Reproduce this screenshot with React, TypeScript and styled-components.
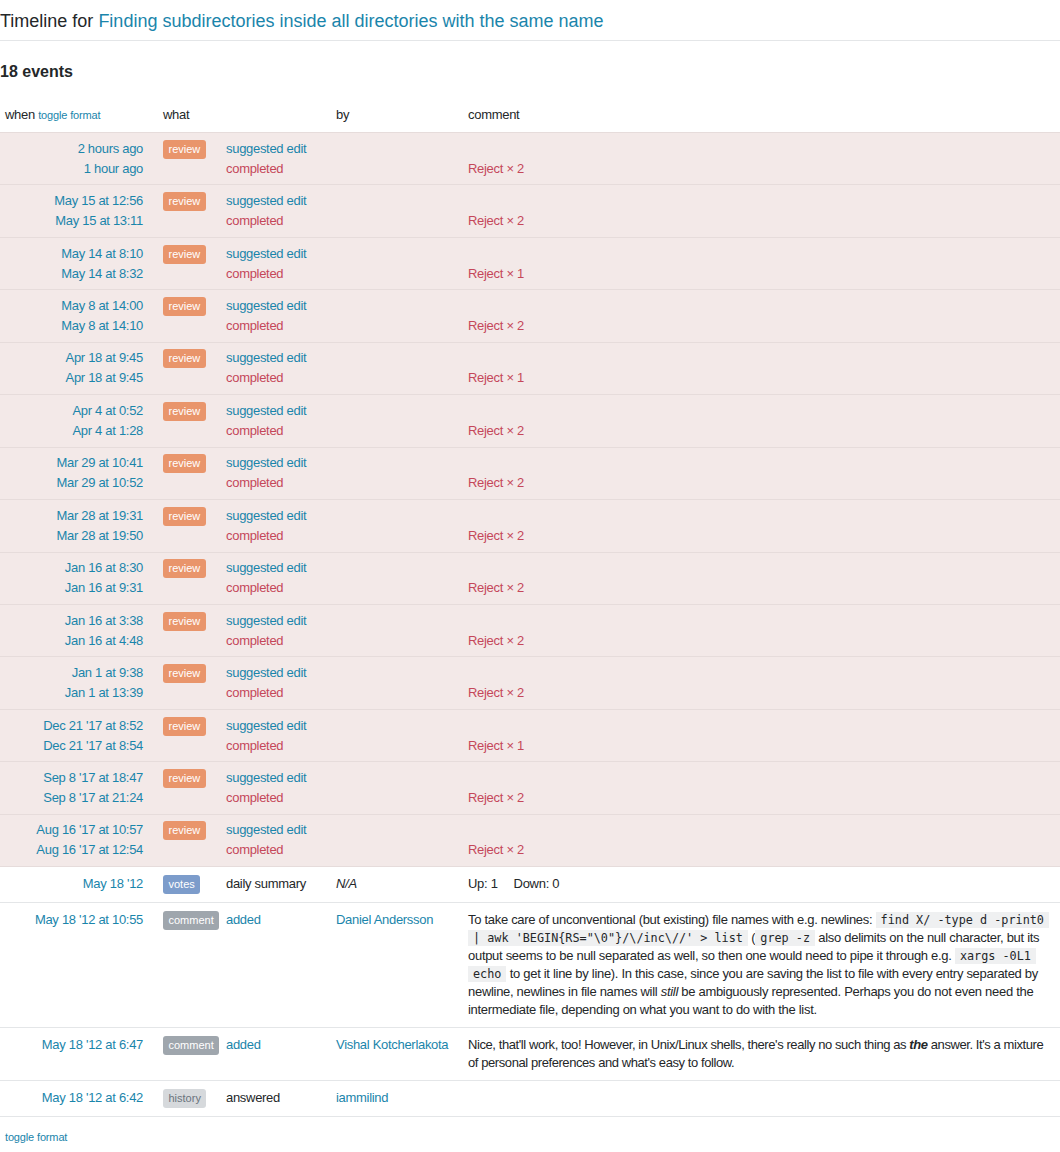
import React from "react";
import styled, { createGlobalStyle } from "styled-components";

const Global = createGlobalStyle`
  html, body { margin: 0; padding: 0; background: #fff; }
  body {
    font-family: "Liberation Sans", Arial, sans-serif;
    font-size: 13px;
    color: #242729;
  }
  a { color: #1a85ab; text-decoration: none; }
`;

const Page = styled.div`
  width: 1060px;
`;

const Title = styled.h1`
  margin: 0;
  padding: 9px 0 7px;
  font-size: 18px;
  line-height: 24px;
  font-weight: normal;
  border-bottom: 1px solid #e4e6e8;
`;

const Count = styled.h2`
  margin: 21px 0 16px;
  font-size: 16px;
  line-height: 20px;
  font-weight: bold;
`;

const Table = styled.table`
  width: 100%;
  table-layout: fixed;
  border-collapse: collapse;
  letter-spacing: -0.3px;
`;

const Col = styled.col<{ $w?: number }>`
  width: ${(p) => (p.$w ? `${p.$w}px` : "auto")};
`;

const HeadCell = styled.th`
  text-align: left;
  font-weight: normal;
  padding: 8px 5px;
  line-height: 18px;
  vertical-align: top;
`;

const Small = styled.a`
  font-size: 11px;
  letter-spacing: -0.15px;
`;

const Row = styled.tr<{ $review?: boolean }>`
  background: ${(p) => (p.$review ? "#f3e9e8" : "#fff")};
  border-top: 1px solid ${(p) => (p.$review ? "#e6dcdb" : "#e4e6e8")};
  border-bottom: 1px solid ${(p) => (p.$review ? "#e6dcdb" : "#e4e6e8")};
  line-height: ${(p) => (p.$review ? "20px" : "18px")};

  & > td {
    padding-top: ${(p) => (p.$review ? "5.72px" : "8px")};
    padding-bottom: ${(p) => (p.$review ? "5.72px" : "8px")};
  }
`;

const Cell = styled.td`
  padding: 8px 5px;
  vertical-align: top;
  text-align: left;
`;

const DateCell = styled(Cell)`
  padding-right: 15px;
  text-align: right;
`;

const Line = styled.div<{ $red?: boolean }>`
  color: ${(p) => (p.$red ? "#c5475a" : "inherit")};
`;

const CommentText = styled.div<{ $tight?: boolean }>`
  letter-spacing: ${(p) => (p.$tight ? "-0.42px" : "-0.3px")};
`;

const badgeColors = {
  review: { bg: "#e9956b", fg: "#fff" },
  votes: { bg: "#7c9ccb", fg: "#fff" },
  comment: { bg: "#9fa6ad", fg: "#fff" },
  history: { bg: "#d6d9dc", fg: "#6a737c" },
};

type BadgeKind = keyof typeof badgeColors;

const Badge = styled.span<{ $kind: BadgeKind }>`
  display: inline-block;
  vertical-align: top;
  margin-top: ${(p) => (p.$kind === "review" ? "1px" : "0")};
  font-size: 11px;
  line-height: 15px;
  letter-spacing: 0;
  padding: 2px 5.5px;
  border-radius: 3px;
  background: ${(p) => badgeColors[p.$kind].bg};
  color: ${(p) => badgeColors[p.$kind].fg};
`;

const Code = styled.code`
  font-family: "DejaVu Sans Mono", "Liberation Mono", monospace;
  font-size: 11.8px;
  letter-spacing: 0;
  background: #eff0f1;
  padding: 1px 5px;
  box-decoration-break: clone;
  -webkit-box-decoration-break: clone;
`;

const Down = styled.span`
  margin-left: 16px;
`;

const Footer = styled.div`
  padding: 12px 5px 0;
  line-height: 16px;
`;

const reviews: [string, string, number][] = [
  ["2 hours ago", "1 hour ago", 2],
  ["May 15 at 12:56", "May 15 at 13:11", 2],
  ["May 14 at 8:10", "May 14 at 8:32", 1],
  ["May 8 at 14:00", "May 8 at 14:10", 2],
  ["Apr 18 at 9:45", "Apr 18 at 9:45", 1],
  ["Apr 4 at 0:52", "Apr 4 at 1:28", 2],
  ["Mar 29 at 10:41", "Mar 29 at 10:52", 2],
  ["Mar 28 at 19:31", "Mar 28 at 19:50", 2],
  ["Jan 16 at 8:30", "Jan 16 at 9:31", 2],
  ["Jan 16 at 3:38", "Jan 16 at 4:48", 2],
  ["Jan 1 at 9:38", "Jan 1 at 13:39", 2],
  ["Dec 21 '17 at 8:52", "Dec 21 '17 at 8:54", 1],
  ["Sep 8 '17 at 18:47", "Sep 8 '17 at 21:24", 2],
  ["Aug 16 '17 at 10:57", "Aug 16 '17 at 12:54", 2],
];

export default function App() {
  return (
    <Page>
      <Global />
      <Title>
        Timeline for{" "}
        <a href="#">Finding subdirectories inside all directories with the same name</a>
      </Title>
      <Count>18 events</Count>
      <Table>
        <colgroup>
          <Col $w={158} />
          <Col $w={63} />
          <Col $w={110} />
          <Col $w={132} />
          <Col />
        </colgroup>
        <thead>
          <tr>
            <HeadCell>
              when <Small href="#">toggle format</Small>
            </HeadCell>
            <HeadCell colSpan={2}>what</HeadCell>
            <HeadCell>by</HeadCell>
            <HeadCell>comment</HeadCell>
          </tr>
        </thead>
        <tbody>
          {reviews.map(([a, b, n], i) => (
            <Row $review key={i}>
              <DateCell>
                <Line>
                  <a href="#">{a}</a>
                </Line>
                <Line>
                  <a href="#">{b}</a>
                </Line>
              </DateCell>
              <Cell>
                <Badge $kind="review">review</Badge>
              </Cell>
              <Cell>
                <Line>
                  <a href="#">suggested edit</a>
                </Line>
                <Line $red>completed</Line>
              </Cell>
              <Cell />
              <Cell>
                <Line>{"\u00a0"}</Line>
                <Line $red>Reject × {n}</Line>
              </Cell>
            </Row>
          ))}
          <Row>
            <DateCell>
              <a href="#">May 18 '12</a>
            </DateCell>
            <Cell>
              <Badge $kind="votes">votes</Badge>
            </Cell>
            <Cell>daily summary</Cell>
            <Cell>
              <i>N/A</i>
            </Cell>
            <Cell>
              Up: 1<Down>Down: 0</Down>
            </Cell>
          </Row>
          <Row>
            <DateCell>
              <a href="#">May 18 '12 at 10:55</a>
            </DateCell>
            <Cell>
              <Badge $kind="comment">comment</Badge>
            </Cell>
            <Cell>
              <a href="#">added</a>
            </Cell>
            <Cell>
              <a href="#">Daniel Andersson</a>
            </Cell>
            <Cell>
              <CommentText>
                To take care of unconventional (but existing) file names with e.g. newlines:{" "}
                <Code>find X/ -type d -print0 | awk 'BEGIN{"{"}RS="\0"{"}"}/\/inc\//' &gt; list</Code> (
                <Code>grep -z</Code> also delimits on the null character, but its output seems to be
                null separated as well, so then one would need to pipe it through e.g.{" "}
                <Code>xargs -0L1 echo</Code> to get it line by line). In this case, since you are
                saving the list to file with every entry separated by newline, newlines in file
                names will <i>still</i> be ambiguously represented. Perhaps you do not even need the
                intermediate file, depending on what you want to do with the list.
              </CommentText>
            </Cell>
          </Row>
          <Row>
            <DateCell>
              <a href="#">May 18 '12 at 6:47</a>
            </DateCell>
            <Cell>
              <Badge $kind="comment">comment</Badge>
            </Cell>
            <Cell>
              <a href="#">added</a>
            </Cell>
            <Cell>
              <a href="#">Vishal Kotcherlakota</a>
            </Cell>
            <Cell>
              <CommentText $tight>
                Nice, that'll work, too! However, in Unix/Linux shells, there's really no such thing
                as{" "}
                <b>
                  <i>the</i>
                </b>{" "}
                answer. It's a mixture of personal preferences and what's easy to follow.
              </CommentText>
            </Cell>
          </Row>
          <Row>
            <DateCell>
              <a href="#">May 18 '12 at 6:42</a>
            </DateCell>
            <Cell>
              <Badge $kind="history">history</Badge>
            </Cell>
            <Cell>answered</Cell>
            <Cell>
              <a href="#">iammilind</a>
            </Cell>
            <Cell />
          </Row>
        </tbody>
      </Table>
      <Footer>
        <Small href="#">toggle format</Small>
      </Footer>
    </Page>
  );
}
